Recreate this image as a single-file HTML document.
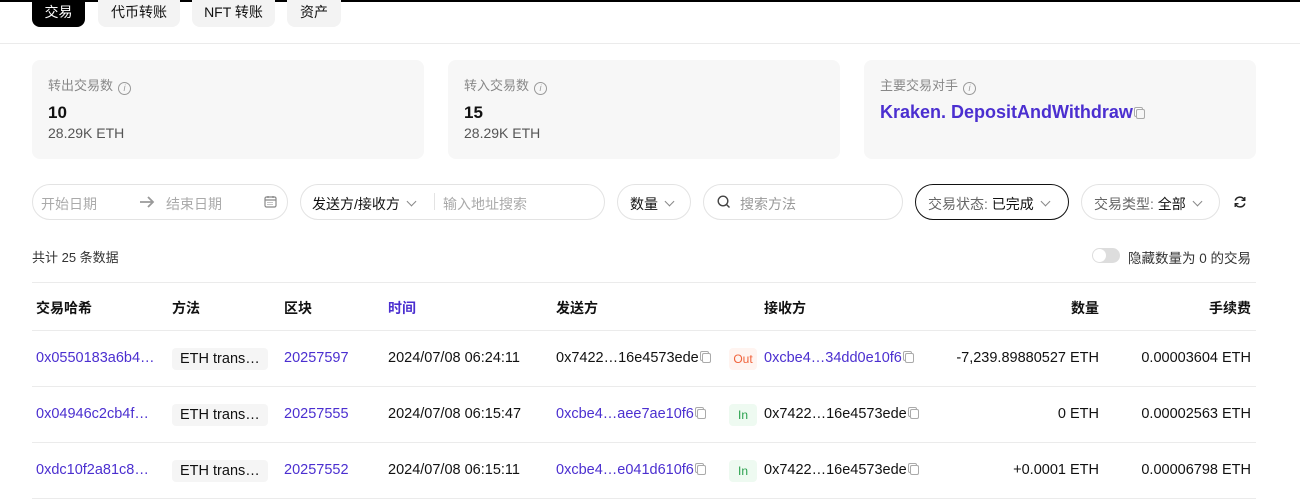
<!DOCTYPE html>
<html><head><meta charset="utf-8"><style>
*{box-sizing:border-box;margin:0;padding:0}
body{width:1300px;height:500px;overflow:hidden;background:#fff;font-family:"Liberation Sans","Noto Sans CJK SC",sans-serif;color:#111;font-size:14px;position:relative}
.a{position:absolute;white-space:nowrap}
.topbar{left:0;top:0;width:1300px;height:2px;background:#000}
.tab{top:0;height:27px;border-radius:0 0 8px 8px;background:#f3f3f3;font-size:14px;line-height:24px;text-align:center;color:#111}
.card{top:60px;width:392px;height:99px;background:#f7f7f7;border-radius:8px}
.lbl{font-size:13px;color:#888}
.info{display:inline-block;width:13px;height:13px;border:1px solid #999;border-radius:50%;font-size:9px;line-height:11px;text-align:center;color:#999;font-style:italic;margin-left:5px;vertical-align:-1px}
.pill{top:184px;height:36px;border:1px solid #e3e3e3;border-radius:18px}
.ph{color:#aaa}
.chev{display:inline-block;width:7px;height:7px;border-right:1.5px solid #888;border-bottom:1.5px solid #888;transform:rotate(45deg);margin-left:8px;vertical-align:4px}
.line{left:32px;width:1224px;height:1px;background:#ebebeb}
.th{top:298px;font-weight:bold;font-size:14px}
.link{color:#4b2fd0}
.cp{display:inline-block;width:9px;height:10px;border:1px solid #aaa;border-radius:2px;margin-left:3px;vertical-align:-1px;box-shadow:-2px -2px 0 -1px #fff,-2px -2px 0 0 #aaa}
.d{font-size:14.5px}
.meth{background:#f5f5f5;border-radius:4px;padding:0 8px;width:96px;height:22px;line-height:22px;font-size:14.5px}
.badge{width:28px;height:22px;border-radius:4px;font-size:12px;line-height:22px;text-align:center}
.out{background:#fff4f0;color:#f0633b}
.in{background:#eefaf1;color:#2aa14d}
</style></head><body>
<div class="a topbar"></div>
<div class="a tab" style="left:32px;width:53px;background:#000;color:#fff">交易</div>
<div class="a tab" style="left:98px;width:82px">代币转账</div>
<div class="a tab" style="left:192px;width:83px">NFT 转账</div>
<div class="a tab" style="left:287px;width:54px">资产</div>
<div class="a" style="left:0;top:43px;width:1300px;height:1px;background:#ebebeb"></div>

<div class="a card" style="left:32px"></div>
<div class="a card" style="left:448px"></div>
<div class="a card" style="left:864px"></div>
<div class="a lbl" style="left:48px;top:75px">转出交易数<span class="info">i</span></div>
<div class="a" style="left:48px;top:103px;font-size:17px;font-weight:bold">10</div>
<div class="a" style="left:48px;top:125px;font-size:14px;color:#555">28.29K ETH</div>
<div class="a lbl" style="left:464px;top:75px">转入交易数<span class="info">i</span></div>
<div class="a" style="left:464px;top:103px;font-size:17px;font-weight:bold">15</div>
<div class="a" style="left:464px;top:125px;font-size:14px;color:#555">28.29K ETH</div>
<div class="a lbl" style="left:880px;top:75px">主要交易对手<span class="info">i</span></div>
<div class="a link" style="left:880px;top:102px;font-size:18px;font-weight:bold">Kraken. DepositAndWithdraw<span class="cp"></span></div>

<div class="a pill" style="left:32px;width:256px"></div>
<div class="a ph" style="left:41px;top:194px">开始日期</div>
<svg class="a" style="left:138px;top:194px" width="18" height="16" viewBox="0 0 18 16"><path d="M2 8h13M10 3l5 5-5 5" fill="none" stroke="#999" stroke-width="1.8"/></svg>
<div class="a ph" style="left:166px;top:194px">结束日期</div>
<svg class="a" style="left:264px;top:195px" width="13" height="13" viewBox="0 0 13 13"><rect x="1" y="2" width="11" height="10" rx="1.5" fill="none" stroke="#888" stroke-width="1.2"/><path d="M1 5h11M4 1v2M9 1v2" stroke="#888" stroke-width="1.2"/><path d="M3.5 7.5h6M3.5 9.5h6" stroke="#888" stroke-width="1" stroke-dasharray="1 1"/></svg>
<div class="a pill" style="left:300px;width:305px"></div>
<div class="a" style="left:312px;top:194px">发送方/接收方<span class="chev"></span></div>
<div class="a" style="left:434px;top:193px;width:1px;height:17px;background:#e3e3e3"></div>
<div class="a ph" style="left:443px;top:194px">输入地址搜索</div>
<div class="a pill" style="left:617px;width:74px"></div>
<div class="a" style="left:630px;top:194px">数量<span class="chev"></span></div>
<div class="a pill" style="left:703px;width:200px"></div>
<svg class="a" style="left:717px;top:195px" width="14" height="14" viewBox="0 0 14 14"><circle cx="6" cy="6" r="4.8" fill="none" stroke="#444" stroke-width="1.4"/><path d="M9.5 9.5l3 3" stroke="#444" stroke-width="1.4"/></svg>
<div class="a ph" style="left:740px;top:194px;color:#999">搜索方法</div>
<div class="a pill" style="left:915px;width:154px;border-color:#111"></div>
<div class="a" style="left:928px;top:194px"><span style="color:#666">交易状态:</span> 已完成<span class="chev"></span></div>
<div class="a pill" style="left:1081px;width:139px"></div>
<div class="a" style="left:1094px;top:194px"><span style="color:#666">交易类型:</span> 全部<span class="chev"></span></div>
<svg class="a" style="left:1233px;top:195px" width="14" height="14" viewBox="0 0 14 14"><path d="M11.5 5A5 5 0 0 0 2.2 5.5M2.5 9a5 5 0 0 0 9.3-.5" fill="none" stroke="#222" stroke-width="1.5"/><path d="M11.8 2v3.3H8.5M2.2 12V8.7h3.3" fill="none" stroke="#222" stroke-width="1.3"/></svg>

<div class="a" style="left:32px;top:247px;font-size:13px;color:#333">共计 25 条数据</div>
<div class="a" style="left:1092px;top:248px;width:28px;height:15px;border-radius:8px;background:#ddd"></div>
<div class="a" style="left:1093px;top:249px;width:13px;height:13px;border-radius:50%;background:#fff"></div>
<div class="a" style="left:1128px;top:247px;font-size:13.5px;color:#333">隐藏数量为 0 的交易</div>

<div class="a line" style="top:282px"></div>
<div class="a th" style="left:36px">交易哈希</div>
<div class="a th" style="left:172px">方法</div>
<div class="a th" style="left:284px">区块</div>
<div class="a th link" style="left:388px">时间</div>
<div class="a th" style="left:556px">发送方</div>
<div class="a th" style="left:764px">接收方</div>
<div class="a th" style="right:201px">数量</div>
<div class="a th" style="right:49px">手续费</div>
<div class="a line" style="top:330px"></div>

<div class="a link d" style="left:36px;top:350px">0x0550183a6b4…</div>
<div class="a meth" style="left:172px;top:348px">ETH trans…</div>
<div class="a link d" style="left:284px;top:350px">20257597</div>
<div class="a d" style="left:388px;top:350px">2024/07/08 06:24:11</div>
<div class="a d" style="left:556px;top:350px">0x7422…16e4573ede<span class="cp"></span></div>
<div class="a badge out" style="left:729px;top:348px">Out</div>
<div class="a link d" style="left:764px;top:350px">0xcbe4…34dd0e10f6<span class="cp"></span></div>
<div class="a d" style="right:201px;top:350px">-7,239.89880527 ETH</div>
<div class="a d" style="right:49px;top:350px">0.00003604 ETH</div>
<div class="a line" style="top:386px"></div>

<div class="a link d" style="left:36px;top:406px">0x04946c2cb4f…</div>
<div class="a meth" style="left:172px;top:404px">ETH trans…</div>
<div class="a link d" style="left:284px;top:406px">20257555</div>
<div class="a d" style="left:388px;top:406px">2024/07/08 06:15:47</div>
<div class="a link d" style="left:556px;top:406px">0xcbe4…aee7ae10f6<span class="cp"></span></div>
<div class="a badge in" style="left:729px;top:404px">In</div>
<div class="a d" style="left:764px;top:406px">0x7422…16e4573ede<span class="cp"></span></div>
<div class="a d" style="right:201px;top:406px">0 ETH</div>
<div class="a d" style="right:49px;top:406px">0.00002563 ETH</div>
<div class="a line" style="top:442px"></div>

<div class="a link d" style="left:36px;top:462px">0xdc10f2a81c8…</div>
<div class="a meth" style="left:172px;top:460px">ETH trans…</div>
<div class="a link d" style="left:284px;top:462px">20257552</div>
<div class="a d" style="left:388px;top:462px">2024/07/08 06:15:11</div>
<div class="a link d" style="left:556px;top:462px">0xcbe4…e041d610f6<span class="cp"></span></div>
<div class="a badge in" style="left:729px;top:460px">In</div>
<div class="a d" style="left:764px;top:462px">0x7422…16e4573ede<span class="cp"></span></div>
<div class="a d" style="right:201px;top:462px">+0.0001 ETH</div>
<div class="a d" style="right:49px;top:462px">0.00006798 ETH</div>
<div class="a line" style="top:498px"></div>
</body></html>
